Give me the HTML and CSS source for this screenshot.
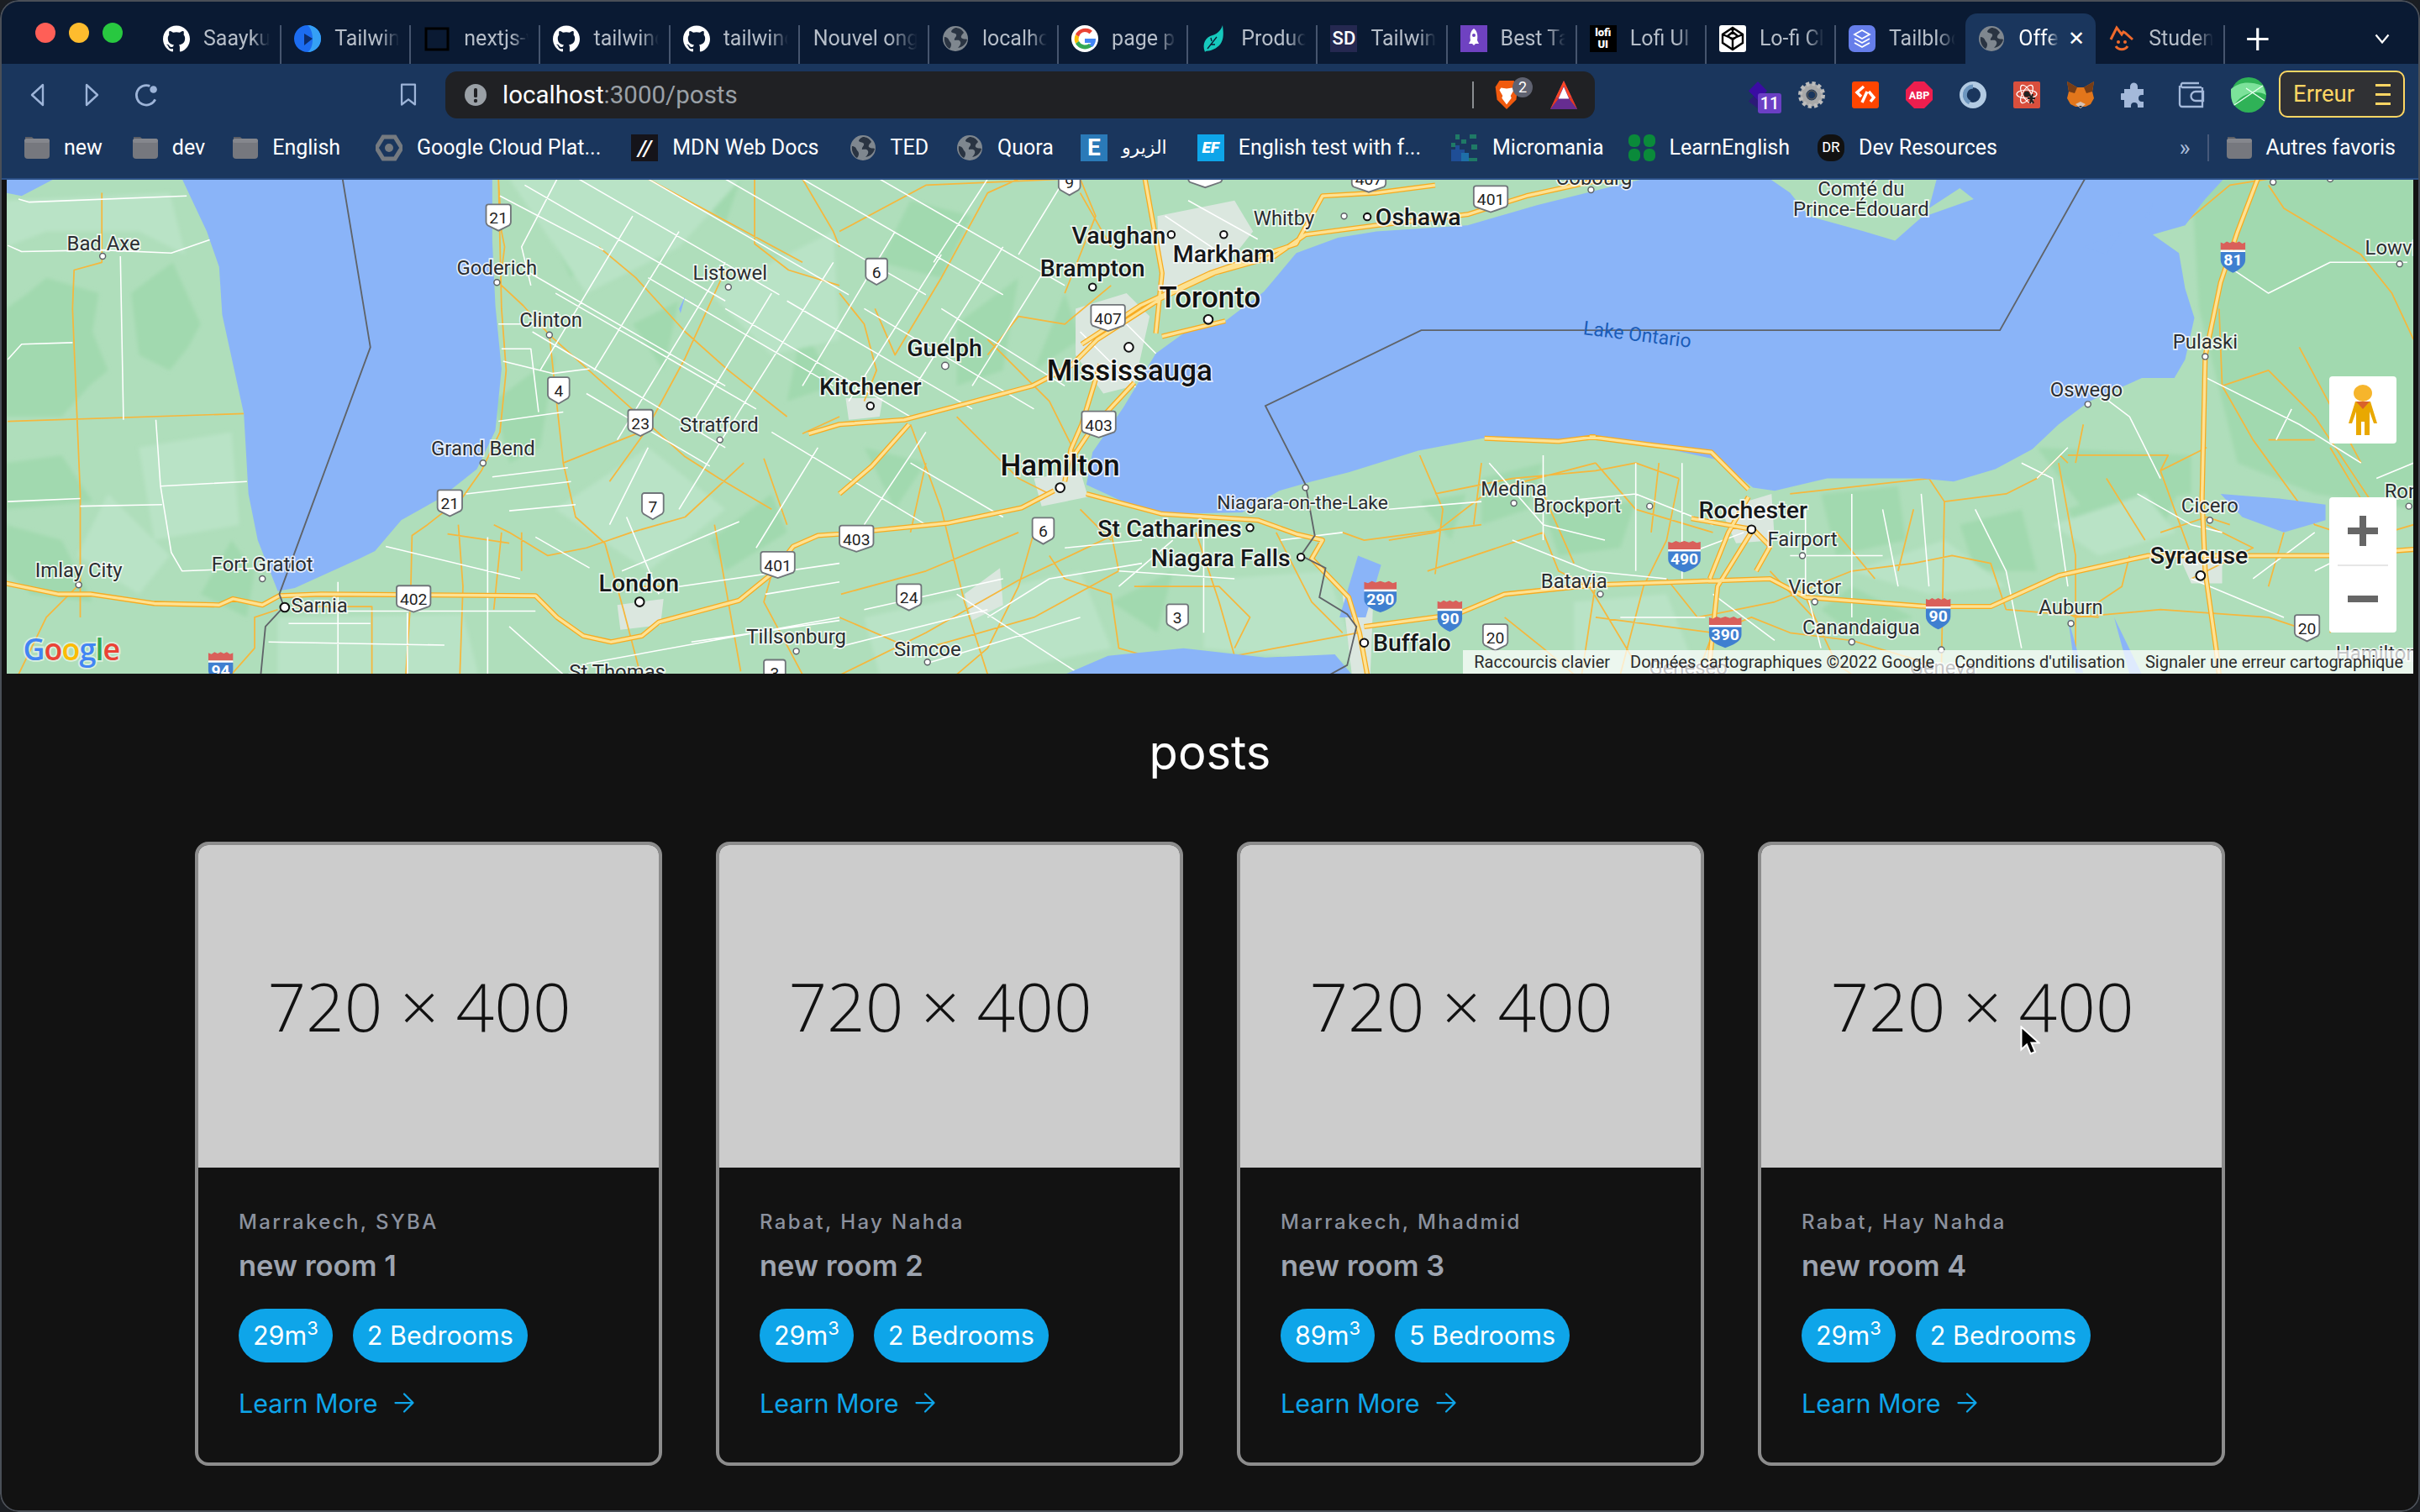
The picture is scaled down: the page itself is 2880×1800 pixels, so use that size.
FILE: index.html
```html
<!DOCTYPE html>
<html lang="en">
<head>
<meta charset="utf-8">
<title>Offers</title>
<link rel="stylesheet" href="styles.css">
</head>
<body>
<svg class="sprites" width="0" height="0" aria-hidden="true">
  <defs>
    <filter id="soft" x="-5%" y="-5%" width="110%" height="110%"><feGaussianBlur stdDeviation="1.200"/></filter>
    <symbol id="i-github" viewBox="0 0 24 24"><path fill="#fff" d="M12 .297c-6.630 0-12 5.373-12 12 0 5.303 3.438 9.800 8.205 11.385.600.113.820-.258.820-.577 0-.285-.010-1.040-.015-2.040-3.338.724-4.042-1.610-4.042-1.610C4.422 18.070 3.633 17.700 3.633 17.700c-1.087-.744.084-.729.084-.729 1.205.084 1.838 1.236 1.838 1.236 1.070 1.835 2.809 1.305 3.495.998.108-.776.417-1.305.760-1.605-2.665-.300-5.466-1.332-5.466-5.930 0-1.310.465-2.380 1.235-3.220-.135-.303-.540-1.523.105-3.176 0 0 1.005-.322 3.300 1.230.960-.267 1.980-.399 3-.405 1.020.006 2.040.138 3 .405 2.280-1.552 3.285-1.230 3.285-1.230.645 1.653.240 2.873.120 3.176.765.840 1.230 1.910 1.230 3.220 0 4.610-2.805 5.625-5.475 5.920.420.360.810 1.096.810 2.220 0 1.606-.015 2.896-.015 3.286 0 .315.210.690.825.570C20.565 22.092 24 17.592 24 12.297c0-6.627-5.373-12-12-12"/></symbol>
    <symbol id="i-globe" viewBox="0 0 32 32"><circle cx="16" cy="16" r="15" fill="#7f878f"/><path fill="#2a3442" d="M16 3c-3 1-5 3-5 5 2 2 5 1 6 3 1 3-3 4-2 7 3 0 6-1 7 2 1 2-1 5-3 7 6-1 10-5 11-10-2-1-5 0-7-2-1-2 1-4 3-6-2-4-6-6-10-6zM3 14c2 0 4 1 5 3 1 3 3 3 3 6 0 2-1 4-2 5-4-2-7-8-6-14z"/></symbol>
    <symbol id="i-folder" viewBox="0 0 30 26"><path fill="#5c5f66" d="M1 0h8l3 3H1z"/><rect y="2" width="30" height="24" rx="4" fill="#76787e"/><rect y="2" width="30" height="5" rx="2.500" fill="#85878d"/></symbol>
    <path id="sh2" d="M-6.500-8.500h13a1.500 1.500 0 0 1 1.500 1.500v10c0 1-.5 1.500-1 2l-7 3.500-7-3.500c-.5-.5-1-1-1-2v-10a1.500 1.500 0 0 1 1.500-1.500z"/>
    <path id="sh1" d="M-5.500-8.500h11a1.500 1.500 0 0 1 1.500 1.500v10c0 1-.5 1.500-1 2l-6 3.500-6-3.500c-.5-.5-1-1-1-2v-10a1.500 1.500 0 0 1 1.500-1.500z"/>
    <path id="sh3" d="M-9.500-8.500h19a1.500 1.500 0 0 1 1.500 1.500v10c0 1-.5 1.500-1 2l-10 3.500-10-3.500c-.5-.5-1-1-1-2v-10a1.500 1.500 0 0 1 1.500-1.500z"/>
    <g id="i2"><path fill="#d9605a" d="M-8-4v-5l2 .8 2-1.300 2 1 2-1 2 1 2-1 2 1.300 2-.8v5z"/><path fill="#fff" d="M-8-4h16v1.500h-16z"/><path fill="#3f7fd0" d="M-8-2.700h16v5c0 4-4 6.500-8 8.500-4-2-8-4.500-8-8.500z"/></g>
    <g id="i3"><path fill="#d9605a" d="M-10.500-4v-5l2.500.8 2.500-1.300 2.500 1 3-1 3 1 2.500-1 2.500 1.300 2.500-.8v5z"/><path fill="#fff" d="M-10.500-4h21v1.500h-21z"/><path fill="#3f7fd0" d="M-10.500-2.700h21v5c0 4-5 6.500-10.500 8.500-5.500-2-10.500-4.500-10.500-8.500z"/></g>
    <path id="hw" d="M4 378L38 385 59 385 100 391 142 392 151 388 170 392 181 386 208 385 347 386 361 400 378 412 396 416 416 412 427 403 479 389 500 372 514 354 530 347 544 346 614 339 662 329 683 318M524 281L544 275 586 272 624 262 669 250 694 237 711 220 739 202 753 193 787 177 826 166 846 152 892 146 951 139 989 127 1030 118 1048 116M704 320L753 333 815 337 840 346 857 350 850 362 874 387 881 410 886 437M713 236L701 275 694 291 690 312M884 406L944 398 975 385 1034 379 1147 375 1170 387 1249 393 1290 393 1334 373 1392 360 1511 360 1564 356M1463 116L1450 150 1439 183 1429 231 1427 323 1429 370 1436 420 1438 437M742 116L753 177 749 216M701 223L739 198 784 177 840 158 857 127 892 125 930 120M753 218L794 208M735 248L708 277 694 298M589 275L565 302 544 320M1030 283L1068 288 1109 293 1133 317M1096 336L1136 343 1147 354 1138 370M1136 343L1113 380 1107 437M1133 322L1120 345 1108 375M1034 283L1010 286 962 284"/>
    <path id="ro" d="M323 116L325 150 327 160 324 184 339 198 356 217 359 245 365 300 373 335 392 352 404 395 415 437M356 217L444 296 466 310 500 330M323 116L325 200 328 240 324 280 312 305 300 322 277 340 267 347 266 390 263 437M66 125L66 170 48 175 47 200 52 320 52 400M5 273L158 268M12 437L30 400 52 378M180 395L165 400 165 420 150 437M190 393L241 393 241 437M297 340L300 380 298 437M320 340L330 345 355 360 380 355 409 345 444 335 482 300M290 346L330 352M325 345L320 395M338 370V345M470 175L444 232 418 280 395 312M489 116V158L511 175 544 185M388 160L412 180 444 215 472 240 510 270M420 116L520 170M520 116L540 150 544 160M365 300L415 280M415 380H430M463 340L480 435M500 372L495 390 520 437M495 297L510 340M520 281L544 270M544 190L560 210 568 240 560 260M567 200L580 230 610 180 640 125 660 116M544 150L600 120 690 116M690 190L710 140 700 116M640 230L660 205 690 210 720 185M640 220L680 260 700 300M620 270L660 310 680 320M590 275L610 330 625 390 640 437M545 385L600 370 660 345M545 437L600 410 660 376 725 345M670 345L660 380 640 420 620 437M544 400L590 420M600 420L670 400 725 370 720 345M735 380H790L810 400 800 420M775 345L790 390 800 425 880 410M680 360L690 375 720 385 725 420 760 430M827 345L850 390 870 410M870 345L884 350 960 340M900 350L930 345 965 318 1034 300M920 295L935 330 930 372M930 320L980 310 1034 305 1060 300 1088 310M1034 300L1060 330 1110 345M925 370L970 355 1000 345M1000 345L1010 370 1030 380 1060 430M1034 378L1025 437M975 400L1000 420 1020 437M1088 310L1080 350 1065 380 1050 437M1075 300L1070 345M1034 400L1110 410 1135 400 1160 410 1200 415 1250 430M1170 387L1190 430 1200 437M1147 370L1175 400M1160 320L1250 310 1260 325 1300 320 1320 310 1335 295 1340 300M1260 325L1258 437M1334 300L1345 360V430M1340 295H1405L1400 305 1430 290M1400 305L1420 360M1100 400L1150 390 1200 370 1240 365 1265 360 1290 365 1300 395M1080 375L1100 400M1335 395L1345 400 1400 395 1470 400 1500 410M1300 395L1360 400M1380 360L1375 380 1345 400M1400 345L1430 335 1445 340M1430 340L1460 355 1420 375M1415 145L1445 120 1470 116M1438 200L1440 250 1460 285 1500 340 1530 350 1564 340M1470 120L1480 135 1530 165 1550 190 1564 220M1440 250L1470 240 1500 270 1540 330M1470 285H1500M1490 225L1530 300M1510 290L1540 340M700 125L720 160M750 230L770 215M700 330L720 350M600 300L590 345M960 300L955 340M1000 320L1020 365M1240 330L1230 370M1365 310L1390 350M1480 345L1470 380M1520 350L1510 410M1110 410L1100 437M1190 345L1215 375M1350 275L1345 300"/>
    <path id="rw" d="M12 129L19 131 121 127M5 159L14 163 66 162 111 164 137 155M78 166L80 272M5 233L14 223 47 222M101 272L104 315 111 358 118 370 170 368M104 315L160 312M5 325L52 323M52 328L105 327M324 127L391 162M340 120L470 195M375 116L505 191M420 116L550 191M470 116L600 191M520 116L650 191M570 116L690 185M340 175L470 250M360 190L490 265M345 215L470 290M420 180L540 250M470 200L590 270M510 195L630 265M560 200L670 265M610 200L690 250M380 255L460 302M500 280L600 340M590 300L650 335M361 116L338 160 344 185M410 140L350 240M440 150L385 240M470 170L400 285M500 190L445 280M540 170L480 265M580 150L520 250M610 165L550 260M650 160L590 255M680 170L630 250M640 116L605 170M690 116L660 165M480 265L440 330M420 290L395 340M530 290L490 355M600 280L560 340M323 273L365 267M319 309L368 303M302 320L370 312M330 331L373 327M323 210H347M325 226H344L349 267M326 234L358 242 382 239M250 354L337 375M187 404H240M174 416L288 418M222 396H347M219 377V437M264 397V437M316 348V437M347 348L382 368M330 406L365 437M479 338L403 370M406 335L427 385M448 416L544 402M496 385L544 377M380 430L544 400M440 380L544 365M540 420L640 395M560 395L650 375M600 430L700 400M620 385L700 437M640 400L680 375 740 365M725 370L800 375M690 355L740 350M780 345V410M725 380L760 350M830 350L870 345M980 350L1030 370 1080 375M1000 295V350M1010 325L1060 320 1110 340M1060 300V370M1090 300V375M900 330L960 325M1130 345L1090 360M1170 330V380L1180 420M1160 360H1220M1200 320V400M1220 330L1230 380M1245 320L1250 380M1280 330L1300 370 1310 420M1310 300L1330 310 1340 380M1360 255L1380 270 1400 310M1320 310L1340 290M1440 170L1470 190 1510 170 1560 170M1385 320L1420 340 1440 345M1420 375L1480 400M1460 375L1500 345M1430 245L1490 275 1530 300M1485 265L1475 285M1540 310L1564 300M1500 370L1550 345M1110 385L1150 415M1050 400L1105 400M965 300L1000 340 1040 350M720 200L760 240M700 215L740 255M755 140L800 170M770 130L815 155"/>
  </defs>
</svg>

<div class="window">
  <header class="tabstrip">
    <div class="lights"><span class="light light-red"></span><span class="light light-yellow"></span><span class="light light-green"></span></div>
    <div class="tab tab-first"><svg class="fav"><use href="#i-github"/></svg><span class="tab-label">Saayku</span></div>
    <div class="tab"><svg class="fav" viewBox="0 0 32 32"><circle cx="16" cy="16" r="16" fill="#1c6cf0"/><path d="M16 0a16 16 0 0 1 0 32c8-4 8-26 0-32z" fill="#35a0f5"/><path d="M12 10l10 6-10 8z" fill="#0c2c6a"/></svg><span class="tab-label">Tailwind</span></div>
    <div class="tab"><svg class="fav" viewBox="0 0 32 32"><rect x="3" y="4" width="26" height="25" fill="none" stroke="#000" stroke-width="3"/></svg><span class="tab-label">nextjs-with</span></div>
    <div class="tab"><svg class="fav"><use href="#i-github"/></svg><span class="tab-label">tailwind</span></div>
    <div class="tab"><svg class="fav"><use href="#i-github"/></svg><span class="tab-label">tailwind</span></div>
    <div class="tab tab-plain"><span class="tab-label">Nouvel ong</span></div>
    <div class="tab"><svg class="fav"><use href="#i-globe"/></svg><span class="tab-label">localhost</span></div>
    <div class="tab"><svg class="fav" viewBox="0 0 32 32"><circle cx="16" cy="16" r="16" fill="#fff"/><path d="M16 8a8 8 0 0 1 5.500 2.200l3.500-3.500A13 13 0 0 0 5 11l4 3a8 8 0 0 1 7-6z" fill="#ea4335"/><path d="M5 11a13 13 0 0 0 0 11l4-3a8 8 0 0 1 0-5z" fill="#fbbc04"/><path d="M5 22a13 13 0 0 0 20 3l-4-3a8 8 0 0 1-12-3z" fill="#34a853"/><path d="M29 16H16v5h7.500a7 7 0 0 1-2.500 2l4 3a13 13 0 0 0 4-10z" fill="#4285f4"/></svg><span class="tab-label">page pr</span></div>
    <div class="tab"><svg class="fav" viewBox="0 0 32 32"><path d="M26 0C27 10 30 24 12 30c-3 1-6 0-7 2C1 22 6 14 14 12 20 10 24 6 26 0z" fill="#16c9bd"/><path d="M8 28L19 14M12 23h5M13 19l-1-4" stroke="#0a1a33" stroke-width="1.300" fill="none"/></svg><span class="tab-label">Product</span></div>
    <div class="tab"><span class="fav fav-sd">SD</span><span class="tab-label">Tailwind</span></div>
    <div class="tab"><svg class="fav" viewBox="0 0 32 32"><rect width="32" height="32" fill="#6f42c1"/><path d="M16 4c4 3 5 8 4 14l2 4h-4l-2 2-2-2h-4l2-4c-1-6 0-11 4-14z" fill="#fff"/><circle cx="16" cy="12" r="2" fill="#6f42c1"/></svg><span class="tab-label">Best Ta</span></div>
    <div class="tab"><span class="fav fav-lofi">lofi<br>UI</span><span class="tab-label">Lofi UI</span></div>
    <div class="tab"><svg class="fav" viewBox="0 0 32 32"><rect width="32" height="32" rx="3" fill="#fff"/><path d="M16 3L28 11v10L16 29 4 21V11zM16 3v8M28 11l-12 5-12-5M16 16v13M10 13l6 4 6-4-6-5z" fill="none" stroke="#000" stroke-width="2.400"/></svg><span class="tab-label">Lo-fi Cl</span></div>
    <div class="tab tab-before-active"><svg class="fav" viewBox="0 0 32 32"><rect width="32" height="32" rx="7" fill="#667eea" /><path d="M16 6l9 5-9 5-9-5zM7 16l9 5 9-5M7 21l9 5 9-5" fill="none" stroke="#fff" stroke-width="1.800"/></svg><span class="tab-label">Tailblocks</span></div>
    <div class="tab tab-active"><svg class="fav"><use href="#i-globe"/></svg><span class="tab-label">Offers</span><span class="tab-close">✕</span></div>
    <div class="tab"><svg class="fav" viewBox="0 0 32 32"><path d="M3 17L10 3l6 8 2-3 2 1 9 8" fill="none" stroke="#f06a2c" stroke-width="3"/><circle cx="12" cy="20" r="2" fill="#f06a2c"/><circle cx="20" cy="20" r="2" fill="#f06a2c"/><path d="M9 25c3 5 11 5 14 0" fill="none" stroke="#f06a2c" stroke-width="3"/></svg><span class="tab-label">Student</span></div>
    <span class="tab-new">+</span>
    <svg class="tab-menu" viewBox="0 0 18 12"><path d="M1.500 1.500L9 10.500l7.500-9" fill="none" stroke="#fff" stroke-width="2.200"/></svg>
  </header>

  <nav class="toolbar">
    <div class="nav-btn"><svg viewBox="0 0 20 30"><path d="M16 3v24L3 15z" fill="none" stroke="#9db4d8" stroke-width="2.400" stroke-linejoin="round"/></svg></div>
    <div class="nav-btn"><svg viewBox="0 0 20 30"><path d="M4 3v24l13-12z" fill="none" stroke="#9db4d8" stroke-width="2.400" stroke-linejoin="round"/></svg></div>
    <div class="nav-btn nav-btn-reload"><svg viewBox="0 0 30 30"><path d="M20 5a11 11 0 1 0 6 15" fill="none" stroke="#9db4d8" stroke-width="2.600"/><circle cx="24" cy="9" r="4" fill="#9db4d8"/></svg></div>
    <div class="nav-btn nav-btn-mark"><svg viewBox="0 0 24 34"><path d="M3 3h18v27l-9-7-9 7z" fill="none" stroke="#9db4d8" stroke-width="2.600" stroke-linejoin="round"/></svg></div>
    <div class="address">
      <svg class="addr-info" viewBox="0 0 26 26"><circle cx="13" cy="13" r="13" fill="#9aa0a6"/><rect x="11" y="5" width="4" height="11" rx="1.500" fill="#202124"/><circle cx="13" cy="20" r="2.200" fill="#202124"/></svg>
      <span class="addr-url">localhost<span class="addr-dim">:3000/posts</span></span>
      <span class="addr-sep"></span>
      <div class="addr-brave">
        <svg viewBox="0 0 30 40"><path d="M6 2h18l5 8-2 16-12 12L3 26 1 10z" fill="#f15a0e"/><path d="M8 11l7 1 7-1 2 3-4 7 1 3-6 8-6-8 1-3-4-7z" fill="#fff"/></svg>
        <span class="brave-badge">2</span>
      </div>
      <svg class="addr-bat" viewBox="0 0 36 38"><path d="M18 0l18 38H0z" fill="#662d91"/><path d="M18 0l11 23-4 0L18 7 11 23H7z" fill="#ff4724"/><path d="M18 8l7 16H11z" fill="#fff"/><path d="M7 23L0 38l11-14zM29 23l7 15-11-14z" fill="#e8391e"/></svg>
    </div>
    <div class="ext-group">
      <div class="ext"><svg viewBox="0 0 36 46"><path d="M18 18L34 34 18 46 2 34z" fill="#2b1a78"/><path d="M18 0l16 16-16 16L2 16z" fill="#3a0ca3"/></svg><span class="ext-badge">11</span></div>
      <div class="ext"><svg viewBox="0 0 32 32"><circle cx="16" cy="16" r="10" fill="none" stroke="#a8a8a8" stroke-width="7"/><circle cx="16" cy="16" r="13.500" fill="none" stroke="#bcbcbc" stroke-width="5" stroke-dasharray="4 3.070"/><circle cx="16" cy="16" r="5" fill="none" stroke="#555" stroke-width="1.500"/></svg></div>
      <div class="ext"><svg viewBox="0 0 32 32"><rect width="32" height="32" rx="3" fill="#ff4500"/><path d="M14 6L6 13l5 5M18 12l-6 13M20 12l6 7-4 5" fill="none" stroke="#fff" stroke-width="3.500"/></svg></div>
      <div class="ext"><svg viewBox="0 0 32 32"><path d="M10 0h12l10 10v12L22 32H10L0 22V10z" fill="#ed1e4e"/><text x="16" y="21" class="abp">ABP</text></svg></div>
      <div class="ext"><svg viewBox="0 0 32 32"><circle cx="16" cy="16" r="12.500" fill="none" stroke="#b3cbe3" stroke-width="7"/><path d="M16 6a10 10 0 0 0-4 19" fill="none" stroke="#6d96bf" stroke-width="5"/></svg></div>
      <div class="ext"><svg viewBox="0 0 32 32"><rect width="32" height="32" rx="2" fill="#d94f3d"/><ellipse cx="16" cy="15" rx="12" ry="5" fill="none" stroke="#fff" stroke-width="1.200"/><ellipse cx="16" cy="15" rx="12" ry="5" fill="none" stroke="#fff" stroke-width="1.200" transform="rotate(60 16 15)"/><ellipse cx="16" cy="15" rx="12" ry="5" fill="none" stroke="#fff" stroke-width="1.200" transform="rotate(120 16 15)"/><circle cx="16" cy="15" r="3.500" fill="#222"/><path d="M19 15l5 11M23 15l-3 11M17 20h9" stroke="#222" stroke-width="2.200"/></svg></div>
      <div class="ext"><svg viewBox="0 0 32 32"><path d="M0 0l12 7h8l12-7-2 12 2 8-4 7-6 3h-12l-6-3-4-7 2-8z" fill="#e2761b"/><path d="M0 0l12 7-3 7-7-2zM32 0L20 7l3 7 7-2z" fill="#763d16"/><path d="M10 27l6 5 6-5-6-3z" fill="#d7c1b3"/><path d="M14 29h4l-2 2z" fill="#222"/></svg></div>
      <div class="ext"><svg viewBox="0 0 32 32"><path d="M4 9h7V6a4.500 4.500 0 0 1 9 0v3h7v7h-2a4 4 0 0 0 0 8h2v7H20v-2a4 4 0 0 0-8 0v2H4V22H2a4 4 0 0 1 0-8h2z" fill="#a4b9da"/></svg></div>
      <div class="ext ext-wallet"><svg viewBox="0 0 32 32"><path d="M28 7H5a3 3 0 0 1 0-5h20M2 5v22a3 3 0 0 0 3 3h24V7M30 12H21a4 4 0 0 0 0 11h9z" fill="none" stroke="#a4b9da" stroke-width="2.300"/></svg></div>
      <div class="ext ext-avatar"><svg viewBox="0 0 42 42"><circle cx="21" cy="21" r="21" fill="#2fb257"/><path d="M0 14C10 6 20 4 38 10L42 21C30 14 10 20 4 34 0 28 0 20 0 14z" fill="#7ce29a"/><path d="M4 33L38 10M18 13L40 28" stroke="#e8fff0" stroke-width="1.500"/></svg></div>
    </div>
    <div class="err-btn"><span>Erreur</span><span class="err-menu"><i></i><i></i><i></i></span></div>
  </nav>

  <nav class="bookmarks">
    <a class="bm"><svg class="bm-icon bm-folder"><use href="#i-folder"/></svg><span>new</span></a>
    <a class="bm"><svg class="bm-icon bm-folder"><use href="#i-folder"/></svg><span>dev</span></a>
    <a class="bm bm-tight-s"><svg class="bm-icon bm-folder"><use href="#i-folder"/></svg><span>English</span></a>
    <a class="bm bm-wide"><svg class="bm-icon" viewBox="0 0 32 32"><path d="M9 3h14l8 13-8 13H9L1 16z" fill="none" stroke="#757a80" stroke-width="5"/><circle cx="16" cy="16" r="5" fill="#757a80"/></svg><span>Google Cloud Plat...</span></a>
    <a class="bm"><span class="bm-icon bm-mdn">//</span><span>MDN Web Docs</span></a>
    <a class="bm"><svg class="bm-icon"><use href="#i-globe"/></svg><span>TED</span></a>
    <a class="bm bm-tight-s"><svg class="bm-icon"><use href="#i-globe"/></svg><span>Quora</span></a>
    <a class="bm bm-tight-m"><span class="bm-icon bm-e">E</span><span class="bm-ar" lang="ar" dir="rtl">الزيرو</span></a>
    <a class="bm"><span class="bm-icon bm-ef">EF</span><span>English test with f...</span></a>
    <a class="bm"><svg class="bm-icon" viewBox="0 0 32 32"><path d="M0 32V18h5v-5h5v5h6v5h5v9z" fill="#1f4e96"/><path d="M5 0h5v6H5zM22 0h8v5h-8zM0 10h5v5H0zM12 6h6v5h-6zM24 12h7v6h-7zM21 28h10v4H21z" fill="#1f7a66"/><path d="M12 22h9v10h-9z" fill="#1e6fa8"/></svg><span>Micromania</span></a>
    <a class="bm bm-tight"><svg class="bm-icon" viewBox="0 0 32 32"><rect x="0" y="0" width="14" height="15" rx="6" fill="#0a8a3a"/><rect x="18" y="0" width="14" height="15" rx="6" fill="#0a8a3a"/><rect x="0" y="17" width="14" height="15" rx="6" fill="#0a8a3a"/><rect x="18" y="17" width="14" height="15" rx="6" fill="#0a8a3a"/></svg><span>LearnEnglish</span></a>
    <a class="bm bm-tight-s"><span class="bm-icon bm-dr">DR</span><span>Dev Resources</span></a>
    <span class="bm-more">»</span>
    <span class="bm-sep"></span>
    <a class="bm"><svg class="bm-icon bm-folder"><use href="#i-folder"/></svg><span>Autres favoris</span></a>
  </nav>

  <section class="map">
    <svg class="map-svg" viewBox="4.350 116.500 1559.500 320" preserveAspectRatio="none">
      <rect class="land" x="0" y="100" width="1600" height="350"/>
      <g class="land-dark" filter="url(#soft)">
        <path d="M4 270L40 270 58 250 70 240 60 215 64 190 30 180 18 190 4 200zM90 230L110 240 122 225 130 210 112 170 98 180 85 190zM4 330L60 325 50 310 40 295 4 300zM4 340L40 350 60 390 20 385 4 370zM130 385L150 350 165 370 160 400zM345 125L380 120 400 145 370 180zM440 116L480 116 470 145zM520 210L540 250 510 260zM590 130L630 140 610 180 570 170zM620 210L660 180 650 240 620 250zM320 260L360 230 350 290 330 300zM410 210L440 195 430 240zM690 190L700 220 670 240zM1420 116L1564 116 1564 330 1500 320 1450 300 1425 200zM1320 290L1420 295 1420 320 1350 330zM1340 330L1420 300 1400 345 1350 350zM1000 330L1060 325 1050 355 1010 360zM920 325L950 320 940 350zM1180 320L1230 315 1235 350 1190 360zM1270 340L1310 330 1320 370 1280 370zM1180 395L1200 380 1240 400 1200 410zM460 350L500 320 510 345 470 370zM790 290L830 260 820 300zM560 290L600 300 580 330zM720 390L760 370 750 410zM960 310L1000 300 990 330 960 340z"/>
      </g>
      <g class="land-light" filter="url(#soft)">
        <path d="M4 130L110 125 120 165 90 150 30 150 4 160zM180 400L300 398 310 437 180 437zM90 290L150 280 155 340 100 350zM70 320L110 360 90 385 50 360zM330 116L480 116 440 160 380 190zM460 190L540 150 544 220 500 230zM360 330L420 290 470 330 420 370zM560 400L700 370 720 420 640 437 570 437zM780 376L860 370 880 430 780 420zM1200 370L1260 350 1300 380 1250 385zM1020 390L1080 385 1100 437 1020 437zM1330 340L1390 320 1410 345 1360 360z"/>
      </g>
      <g class="urban">
        <path d="M697 200L730 190 745 205 735 250 715 255 697 230zM750 140L800 130 812 150 790 178 752 190zM670 310L700 305 705 322 675 328zM400 392L430 388 428 405 402 408zM548 258L572 258 570 270 550 272zM870 385L890 385 888 437 876 437zM1115 330L1148 320 1150 350 1125 352zM1412 360L1440 358 1440 378 1420 378zM625 385L648 368 650 392 630 402z"/>
      </g>
      <use href="#ro" class="road-orange"/>
      <use href="#rw" class="road-white"/>
      <path class="water" d="M4 116H35L14 127 4 125zM118 116L134 150 142 173 144 204 158 268 161 320 167 350 180 383 191 381 233 362 243 357 260 337 285 323 309 304 321 279 325 239 321 198 319 156 319 116z"/>
      <path class="water" d="M704 314L708 293 728 264 749 229 767 216 794 208 819 189 840 164 867 154 892 150 951 146 996 133 1048 120 1065 116H1147L1160 125 1172 140 1208 150 1228 156 1245 141 1279 129 1270 122 1250 135 1255 116H1441L1429 129 1416 146 1395 152 1412 164 1416 187 1422 206 1416 233 1409 245 1388 245 1354 260 1334 275 1317 291 1293 304 1266 312 1245 310 1184 310 1150 318 1136 316 1113 298 1068 288 1030 282 1010 286 961 284 919 292 874 306 850 312 829 318 805 332 760 333 732 327 708 316z"/>
      <path class="water" d="M690 437L718 425 767 420 820 426 865 424 876 437zM1439 320L1477 323 1507 327 1507 337 1480 345 1453 335zM1350 160L1375 150 1365 165zM1390 140L1395 132 1392 142zM440 200L444 192 441 203zM880 360L895 366 885 400 868 400zM1340 400L1345 436 1350 436zM1370 400L1380 437 1388 437z"/>
      <use href="#hw" class="road-hw-case"/>
      <use href="#hw" class="road-hw"/>
      <path class="border" d="M222 116L240 225 181 385 184 393 172 406 169 437M1351 116L1296 214H921L820 263 846 314 852 347 843 360 859 368 855 387 873 398 879 406 873 431 862 437"/>

      <g class="dots">
        <circle cx="66.500" cy="166" r="1.900"/><circle cx="322" cy="183" r="1.900"/><circle cx="472" cy="186" r="1.900"/><circle cx="356" cy="217" r="1.900"/><circle cx="466.500" cy="285" r="1.900"/><circle cx="313" cy="300" r="1.900"/><circle cx="51" cy="379" r="1.900"/><circle cx="170" cy="375" r="1.900"/><circle cx="516" cy="422" r="1.900"/><circle cx="601" cy="429" r="1.900"/><circle cx="612.500" cy="237" r="2.300"/><circle cx="846" cy="316" r="1.900"/><circle cx="981" cy="326" r="1.900"/><circle cx="1069" cy="328" r="1.900"/><circle cx="1168" cy="360" r="1.900"/><circle cx="1176" cy="390" r="1.900"/><circle cx="1200" cy="416" r="1.900"/><circle cx="1342" cy="404" r="1.900"/><circle cx="1432" cy="337" r="1.900"/><circle cx="1429" cy="231" r="1.900"/><circle cx="1353" cy="262" r="1.900"/><circle cx="1555" cy="171" r="1.900"/><circle cx="1510" cy="116" r="1.900"/><circle cx="1473" cy="118" r="1.900"/><circle cx="1031" cy="123" r="1.900"/><circle cx="1037" cy="385" r="1.900"/><circle cx="1561" cy="328" r="1.900"/><circle cx="1258" cy="421" r="1.900"/><circle cx="871" cy="140" r="1.900"/>
        <circle class="dot-big" cx="184.500" cy="393.500" r="2.900"/><circle class="dot-big" cx="414.500" cy="390" r="2.900"/><circle class="dot-big" cx="564" cy="263" r="2.300"/><circle class="dot-big" cx="759" cy="152" r="2.300"/><circle class="dot-big" cx="793" cy="152" r="2.300"/><circle class="dot-big" cx="708" cy="186" r="2.300"/><circle class="dot-big" cx="783" cy="207" r="2.900"/><circle class="dot-big" cx="731.500" cy="225" r="2.900"/><circle class="dot-big" cx="687" cy="316" r="2.900"/><circle class="dot-big" cx="886" cy="140.500" r="2.300"/><circle class="dot-big" cx="810" cy="342" r="2.300"/><circle class="dot-big" cx="843" cy="361" r="2.300"/><circle class="dot-big" cx="1135" cy="343" r="2.600"/><circle class="dot-big" cx="1426" cy="373" r="2.900"/><circle class="dot-big" cx="884" cy="416.500" r="2.600"/>
      </g>

      <g class="shield"><use href="#sh2" x="323" y="141"/><use href="#sh2" x="291.500" y="326"/><use href="#sh1" x="362" y="253"/><use href="#sh2" x="415" y="274"/><use href="#sh1" x="423" y="328"/><use href="#sh3" x="504" y="366"/><use href="#sh3" x="268" y="388"/><use href="#sh1" x="568" y="176"/><use href="#sh3" x="718" y="206"/><use href="#sh3" x="712" y="275"/><use href="#sh1" x="676" y="344"/><use href="#sh3" x="555" y="349"/><use href="#sh2" x="589" y="387"/><use href="#sh1" x="763" y="400"/><use href="#sh3" x="966" y="129"/><use href="#sh3" x="887" y="116"/><use href="#sh1" x="693" y="118"/><use href="#sh3" x="781" y="113"/><use href="#sh2" x="969" y="413"/><use href="#sh2" x="1495" y="407"/><use href="#sh1" x="502" y="436"/></g>
      <g class="inter"><use href="#i2" x="143" y="432"/><use href="#i3" x="894.500" y="386"/><use href="#i2" x="939.500" y="398.500"/><use href="#i3" x="1091.500" y="360"/><use href="#i3" x="1118" y="409"/><use href="#i2" x="1256" y="397"/><use href="#i2" x="1447" y="166"/></g>
      <g class="shield-text">
        <text x="323" y="145">21</text><text x="291.500" y="330">21</text><text x="362" y="257">4</text><text x="415" y="278">23</text><text x="423" y="332">7</text><text x="504" y="370">401</text><text x="268" y="392">402</text><text x="568" y="180">6</text><text x="718" y="210">407</text><text x="712" y="279">403</text><text x="676" y="348">6</text><text x="555" y="353">403</text><text x="589" y="391">24</text><text x="763" y="404">3</text><text x="966" y="133">401</text><text x="887" y="120">407</text><text x="693" y="122">9</text><text x="969" y="417">20</text><text x="1495" y="411">20</text><text x="502" y="440">3</text>
      </g>
      <g class="shield-text shield-text-white">
        <text x="143" y="438">94</text><text x="894.500" y="392">290</text><text x="939.500" y="404.500">90</text><text x="1091.500" y="366">490</text><text x="1118" y="415">390</text><text x="1256" y="403">90</text><text x="1447" y="172">81</text>
      </g>

      <g class="labels">
        <text x="67" y="162">Bad Axe</text><text x="322" y="178">Goderich</text><text x="473" y="181">Listowel</text><text x="357" y="212">Clinton</text><text x="466" y="280">Stratford</text><text x="313" y="295">Grand Bend</text><text x="51" y="374">Imlay City</text><text x="170" y="370">Fort Gratiot</text><text x="207" y="397">Sarnia</text><text x="516" y="417">Tillsonburg</text><text x="400" y="440">St Thomas</text><text x="601" y="425">Simcoe</text><text x="832" y="146">Whitby</text><text x="1033" y="120">Cobourg</text><text class="lab-sm" x="844" y="330">Niagara-on-the-Lake</text><text x="981" y="321">Medina</text><text x="1022" y="332">Brockport</text><text x="1168" y="354">Fairport</text><text x="1020" y="381">Batavia</text><text x="1176" y="385">Victor</text><text x="1206" y="411">Canandaigua</text><text x="1342" y="398">Auburn</text><text x="1432" y="332">Cicero</text><text x="1429" y="226">Pulaski</text><text x="1352" y="257">Oswego</text><text x="1556" y="165">Lowville</text><text x="1206" y="127">Comté du</text><text x="1206" y="140">Prince-Édouard</text><text x="1562" y="323">Rome</text><text x="1540" y="428">Hamilton</text><text x="1094" y="437">Geneseo</text><text x="1259" y="437">Geneva</text>
      </g>
      <g class="labels labels-md">
        <text x="612" y="231">Guelph</text><text x="564" y="256">Kitchener</text><text x="725" y="158">Vaughan</text><text x="793" y="170">Markham</text><text x="708" y="179">Brampton</text><text x="919" y="146">Oshawa</text><text x="758" y="348">St Catharines</text><text x="791" y="367">Niagara Falls</text><text x="414" y="383">London</text><text x="1136" y="336">Rochester</text><text x="1425" y="365">Syracuse</text><text x="915" y="422">Buffalo</text>
      </g>
      <g class="labels labels-lg">
        <text x="784" y="199">Toronto</text><text x="732" y="246.500">Mississauga</text><text x="687" y="308">Hamilton</text>
      </g>
      <text class="lake-label" x="1061" y="221" transform="rotate(7 1061 217)">Lake Ontario</text>
      <text class="google" x="15" y="428"><tspan class="g-b">G</tspan><tspan class="g-r">o</tspan><tspan class="g-y">o</tspan><tspan class="g-b">g</tspan><tspan class="g-g">l</tspan><tspan class="g-r">e</tspan></text>
    </svg>

    <div class="pegman"><svg viewBox="0 0 36 60"><ellipse cx="18" cy="10" rx="11" ry="10" fill="#f6b52c"/><path d="M9 20h18l8 26h-4l-5-14v28h-6V44h-4v16h-6V32L5 46H1z" fill="#e9a800"/><path d="M10 20h16l-8 9z" fill="#d9622b"/></svg></div>
    <div class="zoom-ctrl">
      <div class="zoom-btn"><svg viewBox="0 0 36 36"><path d="M14 0h8v14h14v8H22v14h-8V22H0v-8h14z" fill="#666"/></svg></div>
      <div class="zoom-sep"></div>
      <div class="zoom-btn"><svg viewBox="0 0 36 36"><path d="M0 14h36v8H0z" fill="#666"/></svg></div>
    </div>
    <div class="attrib"><span>Raccourcis clavier</span><span>Données cartographiques ©2022 Google</span><span>Conditions d'utilisation</span><span>Signaler une erreur cartographique</span></div>
  </section>

  <main class="content">
    <h1 class="title">posts</h1>
    <div class="grid">
      <article class="card">
        <div class="thumb">720 × 400</div>
        <div class="card-body">
          <h2 class="loc">Marrakech, SYBA</h2>
          <h3 class="name">new room 1</h3>
          <div class="badges"><span class="badge">29m<sup>3</sup></span><span class="badge">2 Bedrooms</span></div>
          <a class="more">Learn More<svg viewBox="0 0 24 24"><path d="M5 12h14M12 5l7 7-7 7"/></svg></a>
        </div>
      </article>
      <article class="card">
        <div class="thumb">720 × 400</div>
        <div class="card-body">
          <h2 class="loc">Rabat, Hay Nahda</h2>
          <h3 class="name">new room 2</h3>
          <div class="badges"><span class="badge">29m<sup>3</sup></span><span class="badge">2 Bedrooms</span></div>
          <a class="more">Learn More<svg viewBox="0 0 24 24"><path d="M5 12h14M12 5l7 7-7 7"/></svg></a>
        </div>
      </article>
      <article class="card">
        <div class="thumb">720 × 400</div>
        <div class="card-body">
          <h2 class="loc">Marrakech, Mhadmid</h2>
          <h3 class="name">new room 3</h3>
          <div class="badges"><span class="badge">89m<sup>3</sup></span><span class="badge">5 Bedrooms</span></div>
          <a class="more">Learn More<svg viewBox="0 0 24 24"><path d="M5 12h14M12 5l7 7-7 7"/></svg></a>
        </div>
      </article>
      <article class="card">
        <div class="thumb">720 × 400</div>
        <div class="card-body">
          <h2 class="loc">Rabat, Hay Nahda</h2>
          <h3 class="name">new room 4</h3>
          <div class="badges"><span class="badge">29m<sup>3</sup></span><span class="badge">2 Bedrooms</span></div>
          <a class="more">Learn More<svg viewBox="0 0 24 24"><path d="M5 12h14M12 5l7 7-7 7"/></svg></a>
        </div>
      </article>
    </div>
  </main>
  <svg class="cursor" viewBox="0 0 24 36"><path d="M1.500 1.500v27l6.500-6 4.500 11 5.500-2.300-4.500-10.700h9z" fill="#000" stroke="#fff" stroke-width="2"/></svg>
</div>
</body>
</html>
```

FILE: styles.css
```css
* { box-sizing: border-box; }
html, body { margin: 0; padding: 0; }
body { width: 2880px; height: 1800px; background: #1b1e23; overflow: hidden; font-family: Inter, "Liberation Sans", sans-serif; }
.sprites { position: absolute; }

.window { position: relative; width: 2880px; height: 1800px; border-radius: 22px; overflow: hidden; background: #121212; }
.window::after { content: ""; position: absolute; inset: 0; border: 2px solid #4a4f57; border-radius: 22px; pointer-events: none; }

/* tab strip */
.tabstrip { display: flex; align-items: flex-end; height: 76px; background: #0a1a33; padding-left: 179px; position: relative; font-family: Roboto, "Liberation Sans", sans-serif; }
.lights { position: absolute; left: 42px; top: 27px; display: flex; gap: 16px; }
.light { width: 24px; height: 24px; border-radius: 50%; }
.light-red { background: #ff5f57; }
.light-yellow { background: #febc2e; }
.light-green { background: #28c840; }
.tab { width: 154.170px; height: 46px; display: flex; align-items: flex-start; gap: 16px; padding-left: 15px; padding-right: 12px; border-right: 2px solid #46556e; flex: none; }
.tab-first { width: 156.170px; }
.tab-plain { padding-left: 16px; }
.tab-before-active { border-right: none; }
.fav { width: 32px; height: 32px; flex: none; }
.tab-label { font-size: 25px; line-height: 32px; color: #b6bec9; white-space: nowrap; overflow: hidden; flex: 1; min-width: 0; -webkit-mask-image: linear-gradient(90deg, #000 72%, transparent 100%); mask-image: linear-gradient(90deg, #000 72%, transparent 100%); }
.tab-active { background: #1a365d; height: 60px; padding-top: 14px; border: none; border-radius: 14px 14px 0 0; width: 155px; padding-left: 15px; position: relative; }
.tab-active .tab-label { color: #fff; margin-right: 32px; }
.tab-close { position: absolute; right: 13px; top: 14px; color: #fff; font-size: 24px; line-height: 32px; font-family: "DejaVu Sans", sans-serif; }
.fav-sd { background: #252850; color: #fff; font-size: 22px; font-weight: 500; line-height: 32px; text-align: center; }
.fav-lofi { background: #000; color: #fff; font-size: 13px; font-weight: 900; line-height: 14px; text-align: center; padding-top: 2px; }
.tab-new { color: #fff; font-size: 52px; font-weight: 300; line-height: 46px; height: 46px; margin-left: 24px; position: relative; top: -6px; }
.tab-menu { width: 18px; height: 12px; position: absolute; left: 2826px; top: 40px; }

/* toolbar */
.toolbar { display: flex; align-items: center; height: 74px; background: #1a365d; padding-left: 13px; position: relative; }
.nav-btn { width: 64px; height: 56px; display: flex; align-items: center; justify-content: center; flex: none; }
.nav-btn svg { height: 30px; width: 24px; }
.nav-btn-reload svg { width: 32px; height: 32px; }
.nav-btn-mark { margin-left: 249px; }
.address { width: 1368px; height: 56px; margin-left: 12px; background: #202124; border-radius: 14px; display: flex; align-items: center; padding-left: 23px; flex: none; font-family: Roboto, "Liberation Sans", sans-serif; }
.addr-info { width: 26px; height: 26px; flex: none; }
.addr-url { color: #fff; font-size: 29.500px; margin-left: 19px; }
.addr-dim { color: #9aa0a6; }
.addr-sep { width: 2px; height: 32px; background: #8a8d91; margin-left: auto; }
.addr-brave { position: relative; width: 30px; height: 38px; margin-left: 24px; }
.addr-brave svg { width: 30px; height: 38px; }
.brave-badge { position: absolute; left: 22px; top: -2px; width: 24px; height: 24px; border-radius: 12px; background: #5f6270; color: #fff; font-size: 18px; line-height: 24px; text-align: center; }
.addr-bat { width: 36px; height: 34px; margin-left: 35px; margin-right: 19px; flex: none; }
.ext-group { display: flex; margin-left: 162px; flex: none; }
.ext { width: 64px; height: 56px; display: flex; align-items: center; justify-content: center; position: relative; }
.ext svg { width: 32px; height: 32px; }
.ext-wallet { margin-left: 4px; }
.ext-avatar { margin-left: 4px; }
.ext-avatar svg { width: 42px; height: 42px; }
.ext-badge { position: absolute; left: 32px; top: 26px; width: 28px; height: 24px; background: #6b3fc4; border-radius: 3px; color: #fff; font: 500 20px/24px Roboto, sans-serif; text-align: center; }
.abp { font: 700 12.500px Roboto, sans-serif; fill: #fff; text-anchor: middle; }
.err-btn { position: absolute; left: 2712px; top: 8px; width: 150px; height: 56px; border: 2px solid #fdd663; border-radius: 10px; background: #303134; color: #fdd663; font: 400 27.500px/52px Roboto, sans-serif; padding-left: 15px; display: flex; }
.err-menu { display: flex; flex-direction: column; justify-content: center; gap: 8px; margin-left: 25px; }
.err-menu i { display: block; width: 18px; height: 3px; background: #fdd663; }

/* bookmarks */
.bookmarks { display: flex; align-items: center; height: 64px; background: #1a365d; border-bottom: 2px solid #2b4f85; padding: 0 0 10px 29px; font: 400 25px/32px Roboto, "DejaVu Sans", sans-serif; color: #fff; white-space: nowrap; }
.bm { display: flex; align-items: center; gap: 17px; margin-right: 36px; flex: none; }
.bm-wide { margin-left: 6px; }
.bm-tight { margin-left: -7px; }
.bm-tight-m { margin-left: -4px; }
.bm-tight-s { margin-left: -3px; }
.bm-icon { width: 32px; height: 32px; flex: none; }
.bm-folder { width: 30px; height: 26px; }
.bm-mdn { background: #15141a; color: #fff; font: italic 500 26px/32px Roboto, sans-serif; text-align: center; }
.bm-e { background: #2a7ab8; color: #fff; font: 700 28px/32px Roboto, sans-serif; text-align: center; }
.bm-ef { background: #0ea5e9; color: #fff; font: italic 900 19px/32px Roboto, sans-serif; text-align: center; }
.bm-dr { background: #111; color: #fff; border-radius: 14px; font: 500 18px/32px "Liberation Mono", monospace; text-align: center; }
.bm-ar { font-size: 22px; }
.bm-more { color: #a9bbd9; margin-left: auto; font-size: 28px; }
.bm-sep { width: 2px; height: 32px; background: #46597a; margin: 0 21px 0 20px; }
.bookmarks .bm:last-child { margin-right: 29px; }

/* map */
.map { position: relative; height: 588px; margin: 0 8px; overflow: hidden; background: #aedcba; }
.map-svg { display: block; width: 2864px; height: 588px; font-family: Roboto, sans-serif; }
.land { fill: #afdebb; }
.land-dark { fill: #a1d9af; }
.land-light { fill: #b9e3c6; }
.water { fill: #8ab4f8; }
.urban { fill: #dbe7df; }
.road-orange { fill: none; stroke: #f6b73c; stroke-width: .95; stroke-linejoin: round; }
.road-white { fill: none; stroke: #fff; stroke-width: .85; stroke-linejoin: round; }
.road-hw-case { fill: none; stroke: #f7ab1f; stroke-width: 3.300; stroke-linejoin: round; }
.road-hw { fill: none; stroke: #fde293; stroke-width: 1.900; stroke-linejoin: round; }
.border { fill: none; stroke: #5f6368; stroke-width: 1; }
.dots circle { fill: #fff; stroke: #5f6368; stroke-width: .8; }
.dots .dot-big { stroke: #111; stroke-width: 1.100; }
.shield { fill: #fff; stroke: #70757a; stroke-width: 1; }
.shield-text { font-size: 10.500px; text-anchor: middle; fill: #222; }
.shield-text-white { fill: #fff; font-weight: 700; }
.labels { font-size: 13px; text-anchor: middle; fill: #2a2d30; stroke: rgba(255,255,255,.8); stroke-width: 1.800px; paint-order: stroke; }
.lab-sm { font-size: 12.400px; }
.labels-md { font-size: 15.500px; fill: #16181a; font-weight: 500; }
.labels-lg { font-size: 19px; fill: #111; font-weight: 500; }
.lake-label { font-size: 12.500px; fill: #1a5cb8; text-anchor: middle; }
.google { font-size: 19.500px; font-family: "Open Sans", Roboto, sans-serif; font-weight: 600; stroke: rgba(255,255,255,.55); stroke-width: 2px; paint-order: stroke; letter-spacing: -.5px; }
.g-b { fill: #4285f4; }
.g-r { fill: #ea4335; }
.g-y { fill: #fbbc04; }
.g-g { fill: #34a853; }

.pegman { position: absolute; left: 2764px; top: 234px; width: 80px; height: 80px; background: #fff; border-radius: 4px; display: flex; align-items: center; justify-content: center; }
.pegman svg { width: 36px; height: 60px; }
.zoom-ctrl { position: absolute; left: 2764px; top: 378px; width: 80px; height: 161px; background: #fff; border-radius: 4px; display: flex; flex-direction: column; align-items: center; }
.zoom-btn { height: 80px; width: 80px; display: flex; align-items: center; justify-content: center; }
.zoom-btn svg { width: 36px; height: 36px; }
.zoom-sep { width: 60px; height: 2px; background: #e6e6e6; flex: none; }
.attrib { position: absolute; right: 0; bottom: 0; left: 1733px; height: 28px; display: flex; justify-content: flex-end; gap: 24px; padding-right: 12px; background: rgba(255,255,255,.72); color: #2b2b2b; font: 400 20px/28px Roboto, sans-serif; white-space: nowrap; }

/* content */
.content { padding: 64px 0 0; }
.title { margin: 0 0 76px; text-align: center; color: #fff; font-size: 56px; line-height: 60px; font-weight: 400; }
.grid { display: grid; grid-template-columns: repeat(4, 556px); gap: 64px; justify-content: center; }
.card { border: 4px solid #8c8c8c; border-radius: 16px; overflow: hidden; background: #121212; }
.thumb { height: 384px; background: #ccc; color: #111; display: flex; align-items: center; justify-content: center; padding: 0 22px 3px 0; font: 300 80px/1 "Open Sans", sans-serif; }
.card-body { padding: 48px 48px 47px; }
.loc { margin: 0 0 8px; color: #8b919e; font-size: 24px; line-height: 33px; font-weight: 500; letter-spacing: 2.400px; }
.name { margin: 0 0 23px; color: #9ca3af; font-size: 34.500px; line-height: 56px; font-weight: 600; }
.badges { display: flex; gap: 24px; }
.badge { height: 64px; padding: 0 17px; border-radius: 32px; background: #0ea5e9; color: #fff; font-size: 30.500px; line-height: 64px; white-space: nowrap; }
.badge sup { font-size: 22px; line-height: 0; vertical-align: 12px; }
.more { display: flex; align-items: center; height: 48px; margin-top: 24px; color: #0ea5e9; font-size: 30.500px; }
.more svg { width: 36px; height: 36px; margin-left: 13px; fill: none; stroke: #0ea5e9; stroke-width: 1.500; stroke-linecap: round; stroke-linejoin: round; }
.cursor { position: absolute; left: 2404px; top: 1221px; width: 24px; height: 36px; }
```
